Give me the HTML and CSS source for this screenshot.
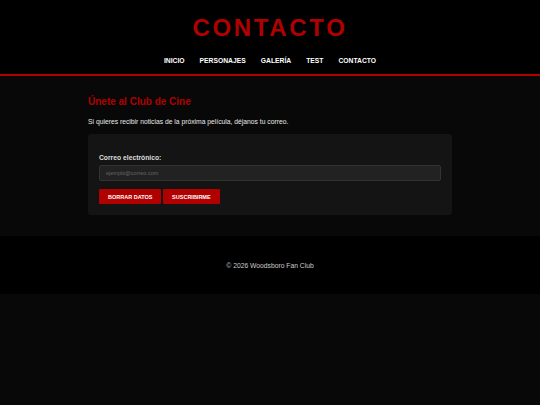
FILE: index.html
```html
<!DOCTYPE html>
<html lang="es">
<head>
<meta charset="utf-8">
<title>Contacto</title>
<link rel="stylesheet" href="styles.css">
</head>
<body>
<header class="site-header">
  <h1 class="site-title">CONTACTO</h1>
  <nav class="site-nav">
    <a href="#">Inicio</a>
    <a href="#">Personajes</a>
    <a href="#">Galería</a>
    <a href="#">Test</a>
    <a href="#">Contacto</a>
  </nav>
</header>
<main class="main">
  <div class="container">
    <h2 class="section-title">Únete al Club de Cine</h2>
    <p class="intro">Si quieres recibir noticias de la próxima película, déjanos tu correo.</p>
    <form class="card">
      <label class="field-label" for="email">Correo electrónico:</label>
      <input class="field-input" id="email" type="email" placeholder="ejemplo@correo.com">
      <div class="actions">
        <button type="reset" class="btn">Borrar datos</button>
        <button type="submit" class="btn">Suscribirme</button>
      </div>
    </form>
  </div>
</main>
<footer class="site-footer">
  <p>© 2026 Woodsboro Fan Club</p>
</footer>
</body>
</html>
```
FILE: styles.css
```css
html, body {
  margin: 0;
  padding: 0;
}
body {
  background: #080808;
  font-family: "Liberation Sans", Arial, sans-serif;
  color: #ddd;
}
.site-header {
  background: #000;
  text-align: center;
  padding: 14px 0 9.7px;
  border-bottom: 2px solid #b00000;
}
.site-title {
  margin: 0;
  font-size: 24px;
  line-height: normal;
  font-weight: bold;
  letter-spacing: 0.11em;
  color: #b00000;
}
.site-nav {
  margin-top: 15.4px;
  display: flex;
  justify-content: center;
  gap: 15px;
}
.site-nav a {
  color: #fff;
  text-decoration: none;
  text-transform: uppercase;
  font-weight: bold;
  font-size: 6.75px;
  line-height: normal;
}
.main {
  padding: 20px 0 21px;
  background: #080808;
}
.container {
  width: 364px;
  margin: 0 auto;
}
.section-title {
  margin: 0 0 11px;
  font-size: 10px;
  line-height: normal;
  color: #b00000;
}
.intro {
  margin: 0 0 9px;
  font-size: 6.75px;
  line-height: normal;
  color: #e8e8e8;
}
.card {
  background: #141414;
  border-radius: 3px;
  padding: 20px 11px 11px;
  display: flex;
  flex-direction: column;
}
.field-label {
  font-size: 6.75px;
  font-weight: bold;
  line-height: normal;
  color: #ddd;
  margin-bottom: 4px;
}
.field-input {
  box-sizing: border-box;
  width: 100%;
  height: 16px;
  margin: 0;
  background: #222;
  border: 1px solid #333;
  border-radius: 2px;
  padding: 0 6px;
  font-family: "Liberation Sans", Arial, sans-serif;
  font-size: 5.5px;
  color: #ddd;
}
.field-input::placeholder {
  color: #666;
}
.actions {
  margin-top: 8px;
  display: flex;
  gap: 1.7px;
}
.btn {
  height: 15px;
  margin: 0;
  padding: 0 9px;
  border: none;
  border-radius: 1px;
  background: #b00000;
  color: #fff;
  font-family: "Liberation Sans", Arial, sans-serif;
  font-weight: bold;
  font-size: 5.5px;
  text-transform: uppercase;
}
.site-footer {
  background: #000;
  height: 58px;
  display: flex;
  align-items: center;
  justify-content: center;
}
.site-footer p {
  margin: 0;
  font-size: 6.75px;
  line-height: normal;
  color: #ccc;
}
```
